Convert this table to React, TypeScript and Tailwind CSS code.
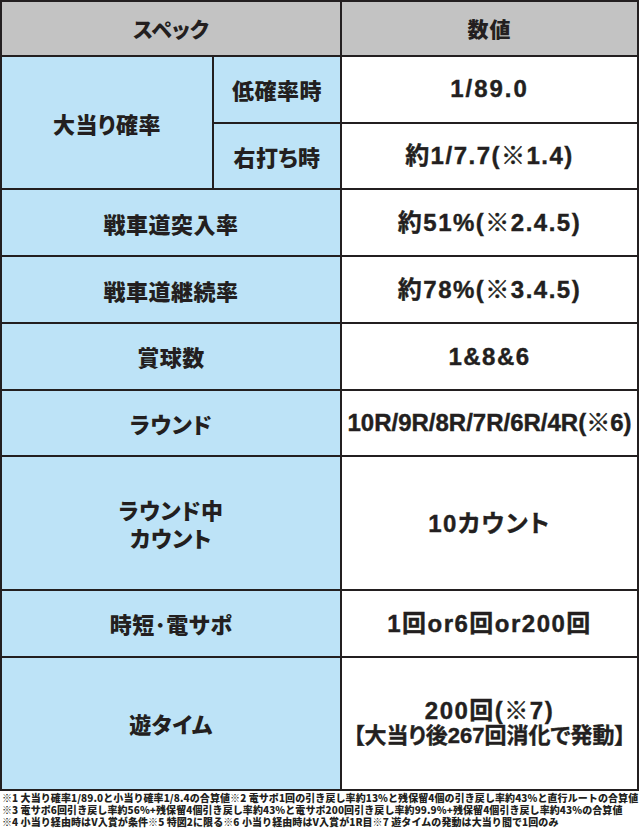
import React from "react";

type Row = {
  label: string[];
  value: string[];
  span?: number;
  narrow?: boolean;
};

const rows: Row[] = [
  { label: ["戦車道突入率"], value: ["約51%(※2.4.5)"] },
  { label: ["戦車道継続率"], value: ["約78%(※3.4.5)"] },
  { label: ["賞球数"], value: ["1&8&6"] },
  { label: ["ラウンド"], value: ["10R/9R/8R/7R/6R/4R(※6)"], narrow: true },
  { label: ["ラウンド中", "カウント"], value: ["10カウント"], span: 2 },
  { label: ["時短･電サポ"], value: ["1回or6回or200回"] },
  { label: ["遊タイム"], value: ["200回(※7)", "【大当り後267回消化で発動】"], span: 2 },
];

const notes = [
  "※1 大当り確率1/89.0と小当り確率1/8.4の合算値※2 電サポ1回の引き戻し率約13%と残保留4個の引き戻し率約43%と直行ルートの合算値",
  "※3 電サポ6回引き戻し率約56%+残保留4個引き戻し率約43%と電サポ200回引き戻し率約99.9%+残保留4個引き戻し率約43%の合算値",
  "※4 小当り経由時はV入賞が条件※5 特図2に限る※6 小当り経由時はV入賞が1R目※7 遊タイムの発動は大当り間で1回のみ",
];

const labelCls =
  "flex flex-col items-center justify-center bg-[#bde3f7] text-[22px] leading-[28px] font-black tracking-[0.5px] text-[#231f20] [font-family:'Noto_Sans_CJK_JP',sans-serif] [font-feature-settings:'palt']";
const valueCls =
  "flex flex-col items-center justify-center bg-white font-bold text-[#231f20] [-webkit-text-stroke:0.4px_#231f20] [font-family:'Liberation_Sans','Noto_Sans_CJK_JP',sans-serif] [font-feature-settings:'palt']";

export default function App() {
  return (
    <div className="w-[640px] h-[829px] bg-white overflow-hidden">
      <div className="grid grid-cols-[210px_126px_295px] grid-rows-[53px_repeat(11,minmax(0,1fr))] gap-[2px] p-[2px] bg-[#231f20] w-[639px] h-[791px]">
        {/* header */}
        <div className="col-span-2 flex items-center justify-center bg-[#c3c3c3] text-[21px] font-black text-[#231f20] [font-family:'Noto_Sans_CJK_JP',sans-serif] [font-feature-settings:'palt']">
          スペック
        </div>
        <div className="flex items-center justify-center bg-[#c3c3c3] text-[21px] font-black tracking-[1px] text-[#231f20] [font-family:'Noto_Sans_CJK_JP',sans-serif]">
          数値
        </div>

        {/* 大当り確率 */}
        <div className={`${labelCls} row-span-2`}>大当り確率</div>
        <div className={labelCls}>低確率時</div>
        <div className={`${valueCls} text-[24px] tracking-[2px]`}>1/89.0</div>
        <div className={labelCls}>右打ち時</div>
        <div className={`${valueCls} text-[24px] tracking-[1.5px]`}>約1/7.7(※1.4)</div>

        {rows.map((r) => (
          <React.Fragment key={r.label.join("")}>
            <div
              className={`${labelCls} col-span-2 ${r.span === 2 ? "row-span-2" : ""}`}
            >
              {r.label.map((l) => (
                <span key={l}>{l}</span>
              ))}
            </div>
            <div
              className={`${valueCls} ${r.span === 2 ? "row-span-2" : ""} ${
                r.narrow ? "text-[24px] tracking-[0px]" : "text-[24px] tracking-[1.5px]"
              } leading-[25px]`}
            >
              {r.value.map((v, i) => (
                <span key={v} className={i === 1 ? "text-[22px] tracking-[0px]" : ""}>
                  {v}
                </span>
              ))}
            </div>
          </React.Fragment>
        ))}
      </div>

      {/* footnotes */}
      <div className="pl-[2px] pt-[1px] text-[10px] leading-[12px] font-black tracking-[0.08px] text-[#231f20] whitespace-nowrap [font-family:'Noto_Sans_CJK_JP',sans-serif]">
        {notes.map((n) => (
          <div key={n}>{n}</div>
        ))}
      </div>
    </div>
  );
}
